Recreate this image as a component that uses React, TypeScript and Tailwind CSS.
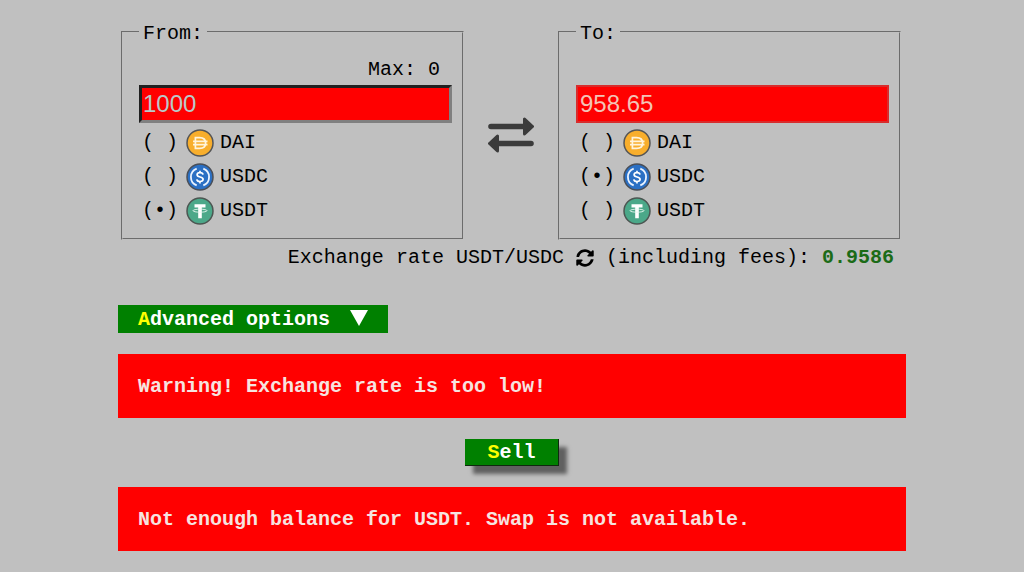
import { useState } from "react";
import { FaSyncAlt } from "react-icons/fa";

type Coin = "DAI" | "USDC" | "USDT";
const coins: Coin[] = ["DAI", "USDC", "USDT"];

function CoinIcon({ coin }: { coin: Coin }) {
  return (
    <svg viewBox="0 0 28 28" className="size-7 shrink-0" aria-hidden="true" fill="none">
      {coin === "DAI" && (
        <>
          <circle cx="14" cy="14" r="13" fill="#f8ae2c" stroke="#555" strokeWidth="1.5" />
          <path d="M9.400 8.600h4.200c3.900 0 6 2.200 6 5.400s-2.100 5.400-6 5.400H9.400zM7 12.400h14.500M7 15.600h14.500" stroke="#fff4dc" strokeWidth="1.700" />
        </>
      )}
      {coin === "USDC" && (
        <>
          <circle cx="14" cy="14" r="13" fill="#2b70c4" stroke="#4a4f58" strokeWidth="1.5" />
          <path d="M10.700 5.600a9 9 0 0 0 0 16.800M17.300 5.600a9 9 0 0 1 0 16.800" stroke="#eaf3ff" strokeWidth="1.800" />
          <path d="M17 11.600c-.2-1.300-1.300-2-3-2s-2.900.8-2.900 2.100c0 3.200 6 1.400 6 4.600 0 1.400-1.200 2.200-3.100 2.200s-3-.8-3.200-2.200M14 7.700v2M14 18.400v2" stroke="#fff" strokeWidth="1.700" />
        </>
      )}
      {coin === "USDT" && (
        <>
          <circle cx="14" cy="14" r="13" fill="#4ba889" stroke="#4c5652" strokeWidth="1.5" />
          <path d="M8.500 7.200h11v3.300h-3.700v10.800h-3.600V10.500H8.500z" fill="#fff" />
          <ellipse cx="14" cy="13.700" rx="7" ry="1.500" stroke="#e6f7f0" strokeWidth=".9" />
        </>
      )}
    </svg>
  );
}

interface PanelProps {
  title: string;
  name: string;
  max?: string;
  value: string;
  onValue?: (v: string) => void;
  selected: Coin;
  onSelect: (c: Coin) => void;
}

function Panel({ title, name, max, value, onValue, selected, onSelect }: PanelProps) {
  const inputLook = onValue
    ? "border-t-[#202020] border-l-[#202020] border-r-[#808080] border-b-[#808080] border-[3px] text-[#b9c9c9]"
    : "border-2 border-[#d82c2c] pl-0.5 text-[#f3c3b6]";
  return (
    <fieldset className="min-w-0 flex-1 border-2 border-[#c0c0c0] pb-[10px] pl-4 pr-[10px] [border-style:groove]">
      <legend className="px-1 pt-1 leading-6">{title}:</legend>
      <div className="mb-[3px] mt-3 h-6 pr-3 text-right leading-6">{max}</div>
      <input
        type="text"
        aria-label={`${title} amount`}
        value={value}
        readOnly={!onValue}
        onChange={(e) => onValue?.(e.target.value)}
        className={`block h-[38px] w-full bg-[#ff0000] px-px font-['Liberation_Sans',sans-serif] text-2xl outline-none ${inputLook}`}
      />
      <div className="pl-[3px] pt-[3px]">
        {coins.map((coin) => (
          <label key={coin} className="flex h-[34px] cursor-pointer items-center">
            <input
              type="radio"
              name={name}
              checked={selected === coin}
              onChange={() => onSelect(coin)}
              className="sr-only"
            />
            <span className="mr-2 whitespace-pre" aria-hidden="true">
              {selected === coin ? "(•)" : "( )"}
            </span>
            <CoinIcon coin={coin} />
            <span className="ml-1.5">{coin}</span>
          </label>
        ))}
      </div>
    </fieldset>
  );
}

function Alert({ children }: { children: string }) {
  return (
    <div role="alert" className="bg-[#ff0000] px-5 pb-[19px] pt-[21px] font-bold leading-6 text-[#f6e4e0]">
      {children}
    </div>
  );
}

export default function App() {
  const [amount, setAmount] = useState("1000");
  const [from, setFrom] = useState<Coin>("USDT");
  const [to, setTo] = useState<Coin>("USDC");
  const swap = () => {
    setFrom(to);
    setTo(from);
  };

  return (
    <div className="min-h-screen bg-[#c0c0c0] pb-5 pt-[18px] font-['Courier_New','Liberation_Mono',monospace] text-xl text-black">
      <main className="mx-auto max-w-[788px]">
        <div className="flex pl-[3px] pr-[5px]">
          <Panel title="From" name="from" max="Max: 0" value={amount} onValue={setAmount} selected={from} onSelect={setFrom} />
          <div className="flex w-[94px] shrink-0 items-center justify-center pt-3">
            <button type="button" aria-label="Swap direction" onClick={swap} className="cursor-pointer">
              <svg viewBox="0 0 46 38" className="h-[38px] w-[46px]" fill="#3b3b3b" stroke="#3b3b3b" strokeLinejoin="round" strokeLinecap="round" aria-hidden="true">
                <path d="M3 10.500H36M10 27.500H43" strokeWidth="5.600" />
                <path d="M36.500 3v15l8-7.500zM9.500 20v15l-8-7.500z" strokeWidth="3" />
              </svg>
            </button>
          </div>
          <Panel title="To" name="to" value="958.65" selected={to} onSelect={setTo} />
        </div>

        <p className="mt-1.5 flex items-center justify-end gap-3 pr-3 leading-6">
          <span>
            Exchange rate {from}/{to}
          </span>
          <button type="button" aria-label="Refresh rate" className="cursor-pointer">
            <FaSyncAlt className="size-[18px]" />
          </button>
          <span>
            (including fees): <b className="text-[#1b6b17]">0.9586</b>
          </span>
        </p>

        <button type="button" className="mt-[35px] flex h-7 cursor-pointer items-center bg-[#008000] px-5 pt-0.5 font-bold text-white">
          <span>
            <span className="text-[#ffff00]">A</span>dvanced options
          </span>
          <svg viewBox="0 0 18 16" className="mb-1 ml-5 h-4 w-[18px]" fill="#fff" aria-hidden="true">
            <path d="M0 0h18L9 16z" />
          </svg>
        </button>

        <div className="mt-[21px]">
          <Alert>Warning! Exchange rate is too low!</Alert>
        </div>
        <div className="flex justify-center py-[21px]">
          <button
            type="button"
            className="h-[27px] cursor-pointer border-b border-r border-[#102810] bg-[#008000] px-[22px] pt-0.5 font-bold leading-6 text-white shadow-[8px_8px_4px_#00000080]"
          >
            <span className="text-[#ffff00]">S</span>ell
          </button>
        </div>
        <Alert>Not enough balance for USDT. Swap is not available.</Alert>
      </main>
    </div>
  );
}
